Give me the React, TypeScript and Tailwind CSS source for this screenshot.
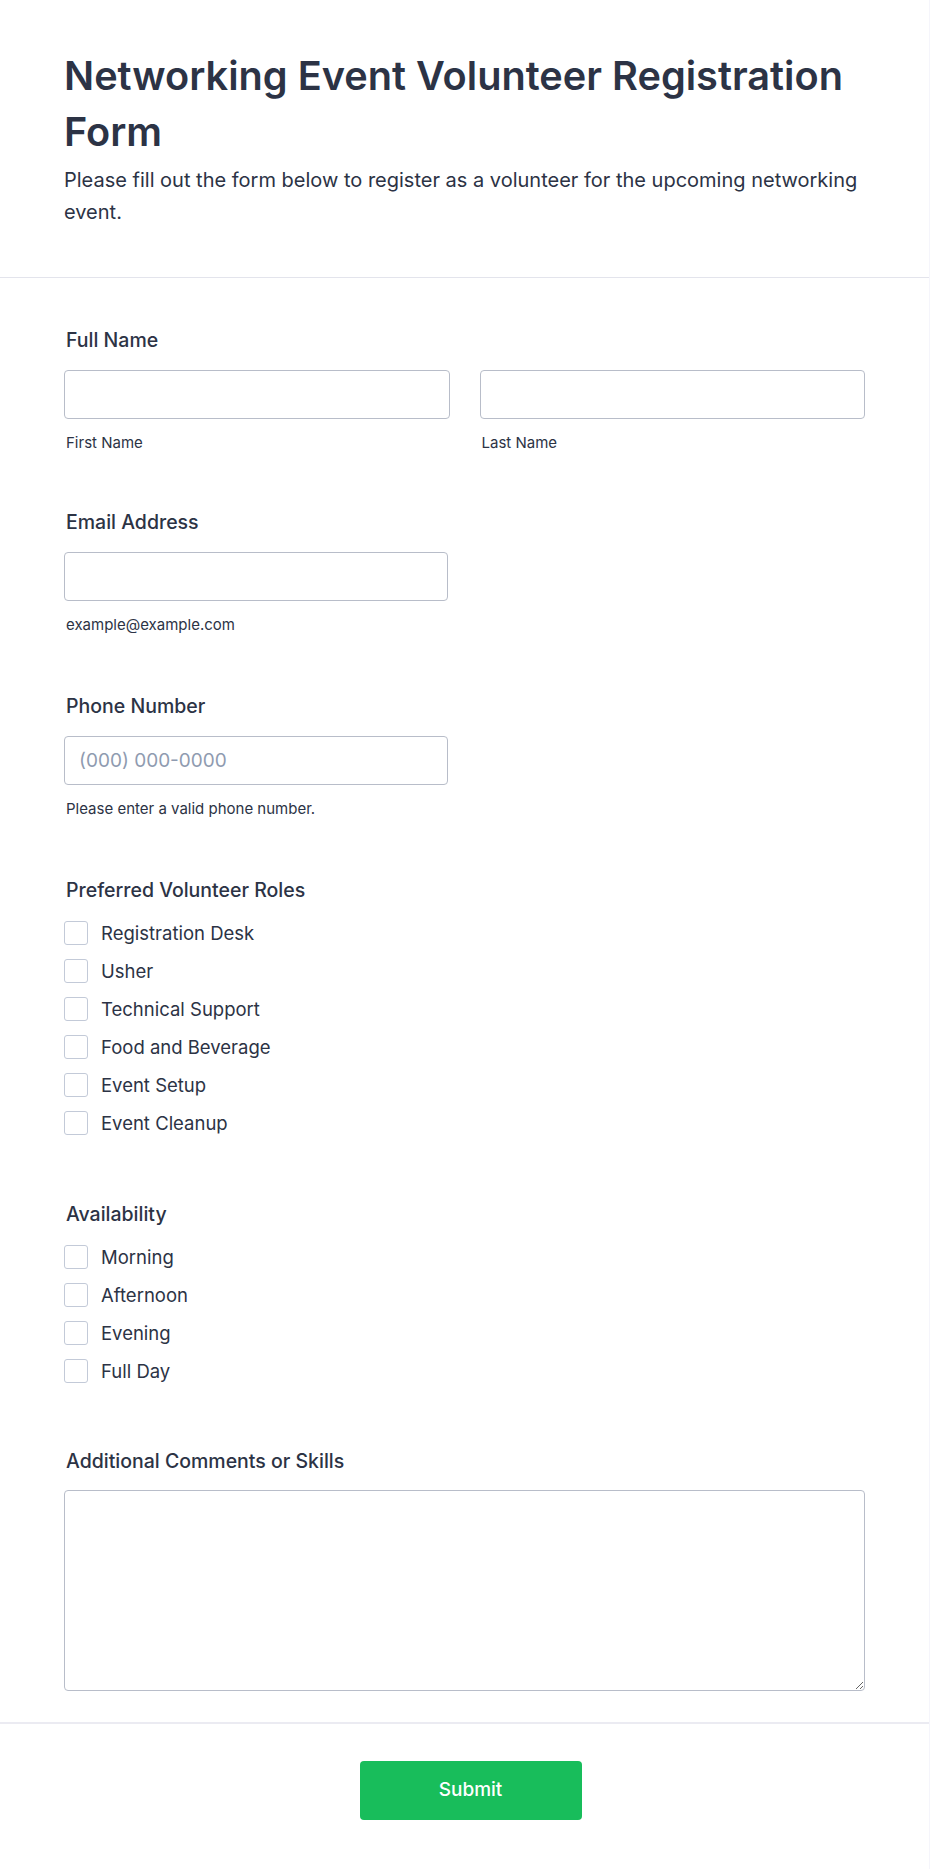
import React from 'react';

const roles = ['Registration Desk', 'Usher', 'Technical Support', 'Food and Beverage', 'Event Setup', 'Event Cleanup'];
const times = ['Morning', 'Afternoon', 'Evening', 'Full Day'];

const inputCls =
  'block h-[49px] w-full rounded-[4px] border border-[#b8bdc9] bg-white px-[14px] text-[19px] text-[#2c3345] outline-none placeholder:text-[#8f9bb0]';

const Label: React.FC<{ children: React.ReactNode }> = ({ children }) => (
  <label className="block px-[2px] text-[19.5px] font-medium leading-6 text-[#2c3345]">{children}</label>
);

const Sub: React.FC<{ children: React.ReactNode }> = ({ children }) => (
  <span className="mt-[14px] block px-[2px] text-[15px] leading-5 text-[#2c3345]">{children}</span>
);

const CheckList: React.FC<{ items: string[] }> = ({ items }) => (
  <div className="mt-[19px] flex flex-col gap-[14px]">
    {items.map((item) => (
      <label key={item} className="flex h-6 items-center gap-[13px] text-[18.5px] leading-6 text-[#2c3345]">
        <span className="h-6 w-6 shrink-0 rounded-[3px] border border-[#c3cad8] bg-white" />
        {item}
      </label>
    ))}
  </div>
);

const App: React.FC = () => {
  return (
    <div className="min-h-screen w-[930px] border-r border-b border-[#f5f5fb] bg-white font-['Inter','Liberation_Sans',sans-serif] text-[#2c3345]">
      {/* Header */}
      <header className="border-b border-[#e3e4ec] pl-16 pr-12 pt-12 pb-[49px]">
        <h1 className="text-[39.7px] font-semibold leading-[56px]">Networking Event Volunteer Registration Form</h1>
        <p className="mt-1 text-[20px] leading-8">
          Please fill out the form below to register as a volunteer for the upcoming networking event.
        </p>
      </header>

      {/* Fields */}
      <main className="px-16 pt-[50px] pb-[31px]">
        <section>
          <Label>Full Name</Label>
          <div className="mt-[18px] grid grid-cols-2 gap-[30px]">
            <div>
              <input className={inputCls} />
              <Sub>First Name</Sub>
            </div>
            <div>
              <input className={inputCls} />
              <Sub>Last Name</Sub>
            </div>
          </div>
        </section>

        <section className="mt-[57px]">
          <Label>Email Address</Label>
          <div className="mt-[18px] w-[384px]">
            <input className={inputCls} />
            <Sub>example@example.com</Sub>
          </div>
        </section>

        <section className="mt-[59px]">
          <Label>Phone Number</Label>
          <div className="mt-[18px] w-[384px]">
            <input className={inputCls} placeholder="(000) 000-0000" />
            <Sub>Please enter a valid phone number.</Sub>
          </div>
        </section>

        <section className="mt-[59px]">
          <Label>Preferred Volunteer Roles</Label>
          <CheckList items={roles} />
        </section>

        <section className="mt-[67px]">
          <Label>Availability</Label>
          <CheckList items={times} />
        </section>

        <section className="mt-[66px]">
          <Label>Additional Comments or Skills</Label>
          <textarea className="mt-[17px] block h-[201px] w-full rounded-[4px] border border-[#b8bdc9] bg-white p-3 text-[18px] outline-none" />
        </section>
      </main>

      {/* Footer */}
      <footer className="flex justify-center border-t-2 border-[#ebebf2] pt-[37px] pb-[50px] pl-3">
        <button className="h-[59px] w-[222px] rounded-[4px] bg-[#18bd5b] text-[19px] font-medium text-white">Submit</button>
      </footer>
    </div>
  );
};

export default App;
